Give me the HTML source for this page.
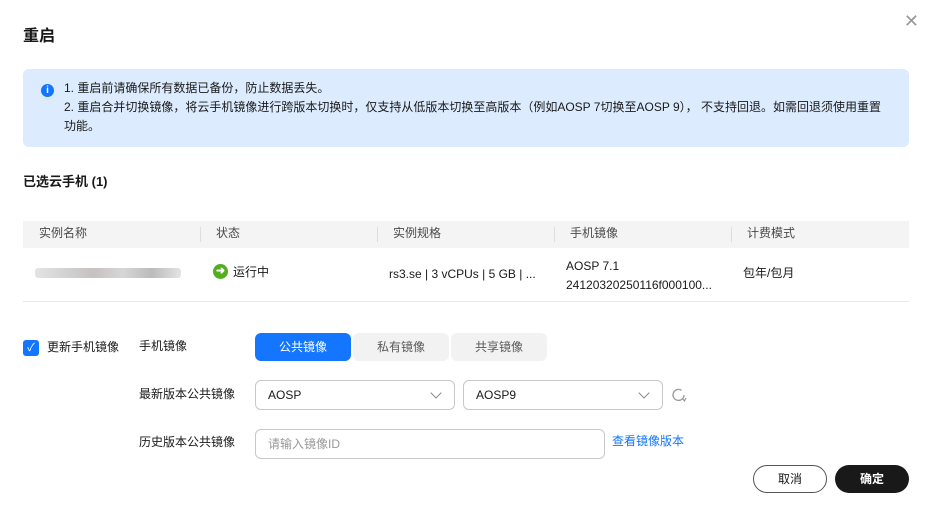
<!DOCTYPE html>
<html><head><meta charset="utf-8"><style>
*{box-sizing:border-box;margin:0;padding:0}
body{width:936px;height:505px;background:#fff;font-family:"Liberation Sans","Noto Sans CJK SC",sans-serif;color:#191919;font-size:12px;line-height:1.25;position:relative;overflow:hidden}
.a{position:absolute}
.title{left:23px;top:27px;font-size:16px;font-weight:bold}
.close{right:17px;top:10px;font-size:18px;color:#999}
.info{left:23px;top:69px;width:886px;height:78px;background:#dcebfd;border-radius:6px}
.info .ic{left:18px;top:15px;width:13px;height:13px;border-radius:50%;background:#1476ff;color:#fff;font-size:10px;font-weight:bold;text-align:center;line-height:13px}
.info .t{left:41px;top:10px;line-height:19px;width:828px}
.sec{left:23px;top:174px;font-size:13px;font-weight:bold}
.th{left:23px;top:221px;width:886px;height:27px;background:#f4f4f4}
.th span{position:absolute;top:5px;color:#4a4a4a}
.sep{position:absolute;top:6px;width:1px;height:15px;background:#ddd}
.row{left:23px;top:248px;width:886px;height:54px;border-bottom:1px solid #e8e8e8}
.row span{position:absolute}
.btn{border-radius:6px;height:28px;text-align:center;line-height:28px}
.sel{border:1px solid #c8c8c8;border-radius:6px;height:30px;line-height:28px;padding-left:12px}
.chev{position:absolute;right:14px;top:8px;width:8px;height:8px;border-right:1.3px solid #888;border-bottom:1.3px solid #888;transform:rotate(45deg)}
</style></head><body>
<div class="a title">重启</div>
<div class="a close">✕</div>
<div class="a info"><div class="a ic">i</div><div class="a t">1. 重启前请确保所有数据已备份，防止数据丢失。<br>2. 重启合并切换镜像，将云手机镜像进行跨版本切换时，仅支持从低版本切换至高版本（例如AOSP 7切换至AOSP 9）， 不支持回退。如需回退须使用重置<br>功能。</div></div>
<div class="a sec">已选云手机 (1)</div>
<div class="a th">
<span style="left:16px">实例名称</span><div class="sep" style="left:177px"></div>
<span style="left:193px">状态</span><div class="sep" style="left:354px"></div>
<span style="left:370px">实例规格</span><div class="sep" style="left:531px"></div>
<span style="left:547px">手机镜像</span><div class="sep" style="left:708px"></div>
<span style="left:724px">计费模式</span></div>
<div class="a row">
<span style="left:12px;top:20px;width:146px;height:10px;background:linear-gradient(90deg,#ddd,#c8c8c8,#b9b2b0,#ccc,#aaa,#ddd);border-radius:3px;opacity:.8"></span>
<span style="left:190px;top:16px;width:15px;height:15px;border-radius:50%;background:#52b01e;color:#fff;font-size:11px;line-height:15px;text-align:center;font-weight:bold">➜</span>
<span style="left:210px;top:17px">运行中</span>
<span style="left:366px;top:19px">rs3.se | 3 vCPUs | 5 GB | ...</span>
<span style="left:543px;top:9px;line-height:19px">AOSP 7.1<br>24120320250116f000100...</span>
<span style="left:720px;top:18px">包年/包月</span></div>
<div class="a" style="left:23px;top:340px;width:16px;height:16px;border-radius:3px;background:#1476ff;color:#fff;text-align:center;line-height:16px;font-size:11px">✓</div>
<div class="a" style="left:47px;top:340px">更新手机镜像</div>
<div class="a" style="left:139px;top:339px">手机镜像</div>
<div class="a btn" style="left:255px;top:333px;width:96px;background:#1476ff;color:#fff">公共镜像</div>
<div class="a btn" style="left:353px;top:333px;width:96px;background:#f2f2f2;color:#595959">私有镜像</div>
<div class="a btn" style="left:451px;top:333px;width:96px;background:#f2f2f2;color:#595959">共享镜像</div>
<div class="a" style="left:139px;top:387px">最新版本公共镜像</div>
<div class="a sel" style="left:255px;top:380px;width:200px">AOSP<div class="chev"></div></div>
<div class="a sel" style="left:463px;top:380px;width:200px">AOSP9<div class="chev"></div></div>
<svg class="a" style="left:671px;top:387px" width="16" height="16" viewBox="0 0 16 16"><path d="M13 8A5.5 5.5 0 1 1 10.5 3.3" fill="none" stroke="#999" stroke-width="1.3"/><path d="M11.5 11.5l2 2.5l1.5-3" fill="none" stroke="#999" stroke-width="1.2"/></svg>
<div class="a" style="left:139px;top:435px">历史版本公共镜像</div>
<div class="a sel" style="left:255px;top:429px;width:350px;color:#999">请输入镜像ID</div>
<div class="a" style="left:612px;top:434px;color:#1476ff">查看镜像版本</div>
<div class="a" style="left:753px;top:465px;width:74px;height:28px;border:1px solid #555;border-radius:14px;text-align:center;line-height:26px">取消</div>
<div class="a" style="left:835px;top:465px;width:74px;height:28px;background:#191919;color:#fff;border-radius:14px;text-align:center;line-height:28px;font-weight:bold">确定</div>
</body></html>
